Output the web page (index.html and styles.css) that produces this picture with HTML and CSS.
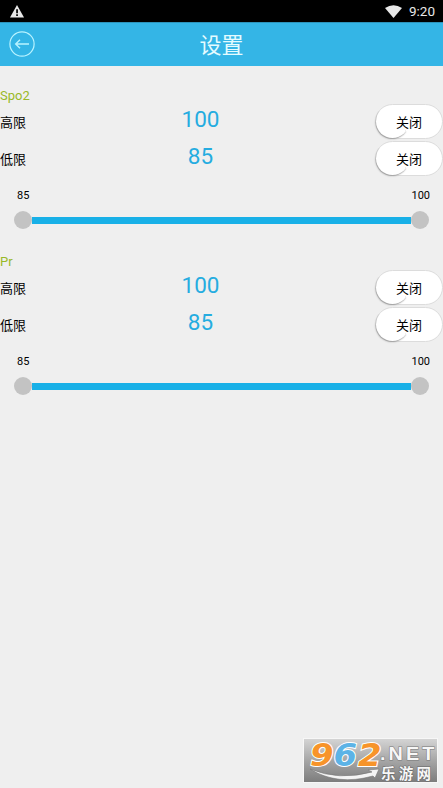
FILE: index.html
```html
<!DOCTYPE html>
<html lang="zh-CN">
<head>
<meta charset="utf-8">
<title>设置</title>
<link rel="stylesheet" href="styles.css">
</head>
<body>
<div class="status">
  <svg class="warn" width="14" height="13" viewBox="0 0 14 13"><path d="M7 0 14 12.500H0Z" fill="#e8e8e8"/><path d="M6.200 4.300h1.700v4H6.200zM6.200 9.300h1.700v1.700H6.200z" fill="#000"/></svg>
  <svg class="wifi" width="17" height="13" viewBox="0 0 17 13"><path d="M0 3Q8.500-2.500 17 3L8.500 13Z" fill="#e8e8e8"/></svg>
  <span class="clock">9:20</span>
</div>
<header class="bar">
  <svg class="back" width="26" height="26" viewBox="0 0 26 26" fill="none" stroke="#b9f3ff"><circle cx="13" cy="13" r="12.100" stroke-width="1.200"/><path d="M20 13H6.500M11 8.800 6.700 13l4.300 4.200" stroke-width="1.400"/></svg>
  <h1>设置</h1>
</header>
<main>
  <section class="group">
    <h2>Spo2</h2>
    <div class="row"><span class="name">高限</span><span class="value">100</span><button class="toggle"><span>关闭</span></button></div>
    <div class="row"><span class="name">低限</span><span class="value">85</span><button class="toggle"><span>关闭</span></button></div>
    <div class="limits"><span>85</span><span>100</span></div>
    <div class="slider"><i class="thumb"></i><i class="track"></i><i class="thumb"></i></div>
  </section>
  <section class="group">
    <h2>Pr</h2>
    <div class="row"><span class="name">高限</span><span class="value">100</span><button class="toggle"><span>关闭</span></button></div>
    <div class="row"><span class="name">低限</span><span class="value">85</span><button class="toggle"><span>关闭</span></button></div>
    <div class="limits"><span>85</span><span>100</span></div>
    <div class="slider"><i class="thumb"></i><i class="track"></i><i class="thumb"></i></div>
  </section>
</main>
<svg class="mark" width="135" height="45" viewBox="0 0 135 45">
  <defs>
    <linearGradient id="bg" x2="0" y2="1"><stop offset="0" stop-color="#d4d4d4"/><stop offset=".5" stop-color="#a6a6a6"/><stop offset="1" stop-color="#7d7d7d"/></linearGradient>
  </defs>
  <rect width="135" height="45" fill="#f7f7f7"/>
  <rect x="1" y="1" width="133" height="43" fill="url(#bg)"/>
  <path d="M7 31Q36 43 69 34L65 32 76 31 72 40 70 38Q34 48 7 31Z" fill="#f4f4f4" stroke="#777" stroke-width=".6"/>
  <g class="digits">
    <text transform="translate(7 28) scale(1.060 1)" fill="#f7942a">9</text>
    <text transform="translate(30.500 28) scale(1.060 1)" fill="#5cb3e6">6</text>
    <text transform="translate(55 28) scale(1.060 1)" fill="#f7942a">2</text>
  </g>
  <text class="net" transform="translate(77 22) scale(1.100 1)" textLength="49.500" lengthAdjust="spacing">.NET</text>
  <text class="site" x="78" y="40.500" textLength="50">乐游网</text>
</svg>
</body>
</html>
```
FILE: styles.css
```css
* { box-sizing: border-box; }
body {
  margin: 0;
  height: 788px;
  overflow: hidden;
  background: #efefef;
  color: #000;
  font-family: Roboto, "Noto Sans CJK SC", sans-serif;
}
h1, h2 { margin: 0; font-weight: 400; }
.status {
  display: flex;
  align-items: center;
  height: 22px;
  padding: 0 8px 0 10px;
  background: #000;
}
.wifi { margin: 0 7px 0 auto; }
.clock { color: #e8e8e8; font-size: 13.500px; line-height: 22px; }
.bar {
  display: grid;
  grid-template-columns: 35px 1fr 35px;
  align-items: center;
  height: 44px;
  background: #34b5e6;
  border-top: 1px solid #2c93bb;
}
.back { margin: -2px 0 0 9px; }
.bar h1 { color: #e4fbff; font-size: 22px; line-height: 43px; text-align: center; padding-top: 1px; }
main { padding-top: 20px; }
.group { height: 166px; }
h2 { color: #99b927; font-size: 13px; line-height: 19px; height: 17px; }
.row {
  display: grid;
  grid-template-columns: 134px 133px 1fr;
  align-items: center;
  height: 37px;
}
.name { font-size: 13px; line-height: 20px; padding-top: 2px; }
.value {
  color: #25ace0;
  font-size: 22.500px;
  line-height: 30px;
  text-align: center;
  margin-top: -5px;
}
.toggle {
  justify-self: end;
  position: relative;
  width: 68px;
  height: 35px;
  padding: 2px 0 0;
  border: 1px solid #dcdcdc;
  border-radius: 18px;
  background: #fff;
  color: #000;
  font: 13px/20px Roboto, "Noto Sans CJK SC", sans-serif;
}
.toggle::before {
  content: "";
  position: absolute;
  left: 0;
  top: 0;
  width: 33px;
  height: 33px;
  border-radius: 50%;
  background: #fff;
  box-shadow: -0.5px 1px 1.5px #999;
  clip-path: polygon(-3px 6px, 8px 6px, 31px 27px, 31px 36px, -3px 36px);
}
.toggle span { position: relative; }
.limits {
  display: flex;
  justify-content: space-between;
  margin-top: 12px;
  padding: 0 13px 0 17px;
  font-size: 11px;
  line-height: 14px;
}
.slider {
  display: flex;
  align-items: center;
  height: 18px;
  margin: 8px 14px 0;
}
.thumb { width: 18px; height: 18px; border-radius: 50%; background: #c3c3c3; }
.track { flex: 1; height: 7px; background: #18b0e7; }
.mark { position: absolute; left: 303px; top: 738px; }
.digits {
  font: italic 700 32px "DejaVu Sans", sans-serif;
  stroke: #fff;
  stroke-width: 2px;
  paint-order: stroke;
}
.net {
  font: 700 18px "Liberation Sans", sans-serif;
  fill: #f7f7f7;
  stroke: #777;
  stroke-width: 1px;
  paint-order: stroke;
}
.site {
  font: 700 14.500px "Noto Sans CJK SC", sans-serif;
  fill: #f7f7f7;
  stroke: #666;
  stroke-width: 1px;
  paint-order: stroke;
}
```
